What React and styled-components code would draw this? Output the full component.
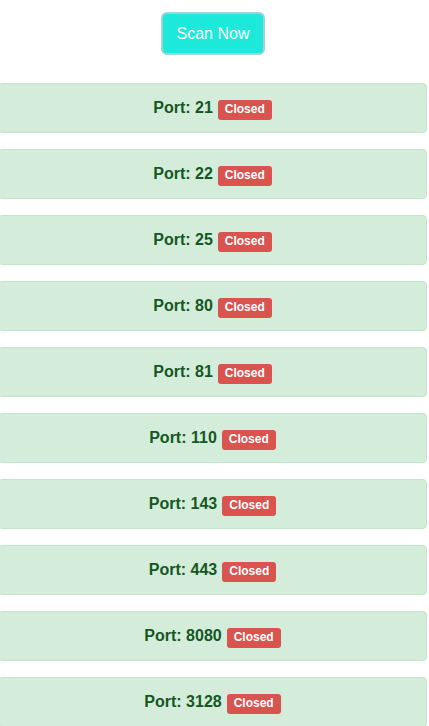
import React from "react";
import styled, { createGlobalStyle } from "styled-components";

const Global = createGlobalStyle`
  html, body { margin: 0; padding: 0; background: #ffffff; }
  body { font-family: "Liberation Sans", Arial, sans-serif; }
  * { box-sizing: border-box; }
`;

const Page = styled.div`
  display: flex;
  flex-direction: column;
  align-items: center;
  padding-top: 12px;
  overflow: hidden;
`;

const ScanButton = styled.button`
  font-family: "Liberation Sans", Arial, sans-serif;
  font-size: 16px;
  color: #ffffff;
  background: #1de9da;
  border: 2px solid #9dd2df;
  border-radius: 6px;
  padding: 10px 14px;
  line-height: 19px;
  margin: 0 0 28px -3px;
  cursor: pointer;
`;

const List = styled.div`
  display: flex;
  flex-direction: column;
  gap: 16px;
  align-self: stretch;
  margin-left: -2px;
  margin-right: 2px;
`;

const Row = styled.div`
  display: flex;
  align-items: center;
  justify-content: center;
  height: 50px;
  background: #d4edda;
  border: 1px solid #c3e6cb;
  border-radius: 4px;
  color: #155724;
  font-size: 16px;
  font-weight: bold;
`;

const Badge = styled.span`
  display: inline-block;
  margin: 3px 0 0 5px;
  padding: 3px 7px 4px;
  font-size: 12px;
  line-height: 13px;
  font-weight: bold;
  color: #ffffff;
  background: ${(p) => (p.$open ? "#28a745" : "#d9534f")};
  border-radius: 3px;
`;

const ports = [21, 22, 25, 80, 81, 110, 143, 443, 8080, 3128];

export default function App() {
  return (
    <>
      <Global />
      <Page>
        <ScanButton>Scan Now</ScanButton>
        <List>
          {ports.map((p) => (
            <Row key={p}>
              Port: {p}
              <Badge>Closed</Badge>
            </Row>
          ))}
        </List>
      </Page>
    </>
  );
}
